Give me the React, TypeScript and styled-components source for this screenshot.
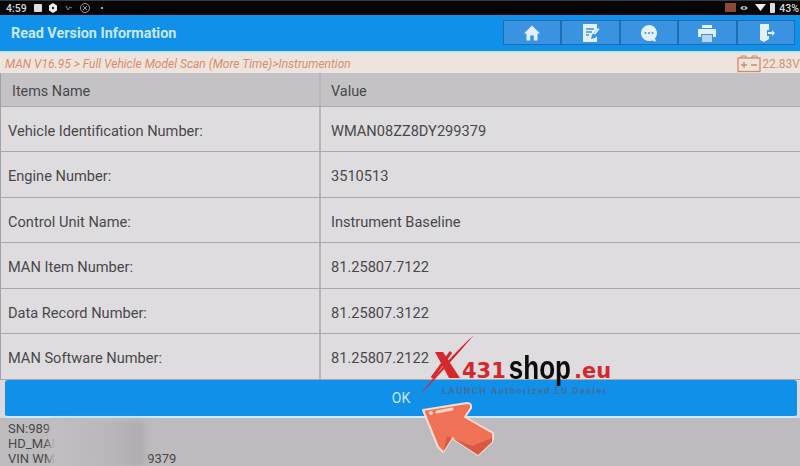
import React from 'react';
import styled, {createGlobalStyle} from 'styled-components';

const GlobalStyle = createGlobalStyle`
  html, body {
    margin: 0;
    padding: 0;
    width: 800px;
    height: 466px;
    overflow: hidden;
    background: #bdbbbd;
    font-family: Roboto, "Liberation Sans", sans-serif;
  }
`;

const Screen = styled.div`
  position: relative;
  width: 800px;
  height: 466px;
  overflow: hidden;
  display: flex;
  flex-direction: column;
`;

const StatusBar = styled.div`
  height: 15px;
  background: #060606;
  border-top: 1px solid #3a3a3a;
  box-sizing: border-box;
  display: flex;
  align-items: center;
  justify-content: space-between;
  padding: 0 1px 0 6px;
  color: #d8d8d8;
  font-size: 10.5px;
  font-weight: 500;
`;

const StatusGroup = styled.div`
  display: flex;
  align-items: center;
  gap: 3px;
`;

const Header = styled.div`
  height: 36px;
  background: #1190ea;
  border-bottom: 2px solid #bfe6fa;
  display: flex;
  align-items: center;
  justify-content: space-between;
  padding: 0 5px 0 11px;
`;

const Title = styled.div`
  color: #c9e9fb;
  font-size: 14.4px;
  font-weight: 700;
`;

const Toolbar = styled.div`
  display: flex;
  height: 25px;
  margin-top: -1px;
`;

const ToolButton = styled.div`
  width: 58.4px;
  background: #3a93e0;
  border: 1px solid #1f6cb0;
  box-sizing: border-box;
  display: flex;
  align-items: center;
  justify-content: center;
`;

const Breadcrumb = styled.div`
  height: 20px;
  background: #ede5dd;
  display: flex;
  align-items: center;
  justify-content: space-between;
  padding: 1px 0 0 5px;
  box-sizing: border-box;
  color: #d98b70;
  font-size: 12px;
  font-style: italic;
`;

const Voltage = styled.div`
  display: flex;
  align-items: center;
  gap: 1px;
  font-style: normal;
  color: #d6916f;
  font-size: 12px;
`;

const Row = styled.div<{$head?: boolean; $height: number}>`
  display: grid;
  grid-template-columns: 320px 1fr;
  height: ${p => p.$height}px;
  box-sizing: border-box;
  background: ${p => (p.$head ? '#c4c2c4' : '#dfdce0')};
  border-left: 1px solid #a2a1a3;
  border-bottom: 1px solid #a9a8aa;
  color: #48484a;
  font-size: ${p => (p.$head ? 14.4 : 14.6)}px;
`;

const Cell = styled.div<{$head?: boolean; $value?: boolean}>`
  display: flex;
  align-items: center;
  padding-left: ${p => (p.$value ? 10 : p.$head ? 11 : 7)}px;
  padding-top: 3px;
  border-left: ${p => (p.$value ? '2px solid #b7b6b8' : 'none')};
  margin-left: ${p => (p.$value ? -2 : 0)}px;
`;

const OkBar = styled.div`
  height: 38px;
  background: #dcd9dc;
  box-sizing: border-box;
  padding: 0 3px 0 5px;
`;

const OkButton = styled.div`
  height: 38px;
  background: #1190ea;
  border-radius: 3px;
  border-bottom: 2px solid #cfeafa;
  box-sizing: border-box;
  display: flex;
  align-items: center;
  justify-content: center;
  color: #c9e9fb;
  font-size: 14px;
`;

const Footer = styled.div`
  flex: 1;
  background: #bdbbbd;
  padding: 3px 0 0 8px;
  color: #48484a;
  font-size: 13px;
  line-height: 15px;
`;

const BlurPatch = styled.div`
  position: absolute;
  left: 50px;
  top: 421px;
  width: 96px;
  height: 46px;
  background: linear-gradient(90deg, #c2c0c2 0%, #b9b7b9 60%, #aeacae 95%, #b8b6b8 100%);
  filter: blur(3px);
`;

const VinTail = styled.span`
  margin-left: 92px;
`;

const LogoArea = styled.div`
  position: absolute;
  left: 420px;
  top: 334px;
  width: 200px;
  height: 70px;
`;

const LogoX = styled.svg`
  position: absolute;
  left: 0;
  top: 0;
`;

const LogoText = styled.div`
  position: absolute;
  left: 42px;
  top: 22px;
  display: flex;
  align-items: baseline;
  line-height: 26px;
`;

const LogoRed = styled.span`
  color: #d3282c;
  font-family: "DejaVu Sans", sans-serif;
  font-weight: 700;
  font-size: 21px;
`;

const LogoBlack = styled.span`
  display: inline-block;
  margin: 0 3px 0 3px;
  color: #0c0c0c;
  font-family: "Liberation Sans", sans-serif;
  font-weight: 700;
  font-size: 26px;
  transform: scaleY(1.25);
  transform-origin: 50% 75%;
`;

const LogoTagline = styled.div`
  position: absolute;
  left: 22px;
  top: 51px;
  color: #3f6f9f;
  font-size: 9.5px;
  font-weight: 700;
  letter-spacing: 1.3px;
  white-space: nowrap;
`;

const Arrow = styled.svg`
  position: absolute;
  left: 420px;
  top: 400px;
`;

const rows = [
  ['Vehicle Identification Number:', 'WMAN08ZZ8DY299379', 45],
  ['Engine Number:', '3510513', 46],
  ['Control Unit Name:', 'Instrument Baseline', 45],
  ['MAN Item Number:', '81.25807.7122', 46],
  ['Data Record Number:', '81.25807.3122', 45],
  ['MAN Software Number:', '81.25807.2122', 46],
] as const;

const toolIcons = [
  <svg key="home" width="18" height="18" viewBox="0 0 18 18">
    <path d="M9 1.5 17 9.5h-2.5V16.5H10.8V11.5H7.2V16.5H3.5V9.5H1z" fill="#e4f0f8" />
  </svg>,
  <svg key="edit" width="20" height="20" viewBox="0 0 20 20">
    <path d="M2 1h14v5l-5 6-1 4 4-1 2-2v6H2z" fill="#e4f0f8" />
    <path d="M5 6h8M5 9h6M5 12h3" stroke="#3a93e0" strokeWidth="1.3" />
    <path d="M12.5 10.5 17 5l1.5 1.2-4.5 5.6z" fill="#e4f0f8" />
  </svg>,
  <svg key="chat" width="20" height="20" viewBox="0 0 20 20">
    <path d="M10 2a8 8 0 1 0 3 15.4l4 1.4-1-3.6A8 8 0 0 0 10 2z" fill="#e4f0f8" />
    <circle cx="6.5" cy="10" r="1" fill="#3a93e0" />
    <circle cx="10" cy="10" r="1" fill="#3a93e0" />
    <circle cx="13.5" cy="10" r="1" fill="#3a93e0" />
  </svg>,
  <svg key="print" width="20" height="20" viewBox="0 0 20 20">
    <path d="M5 2h10v3H5z" fill="#e4f0f8" />
    <path d="M2 6h16a1 1 0 0 1 1 1v7h-3v-3H4v3H1V7a1 1 0 0 1 1-1z" fill="#e4f0f8" />
    <path d="M5 12h10v7H5z" fill="#b7d6ee" />
  </svg>,
  <svg key="exit" width="20" height="20" viewBox="0 0 20 20">
    <path d="M4 1h9v6h-2v6h2v3l-5 3-4-2z" fill="#e4f0f8" />
    <path d="M12 9h4V7l3 3-3 3v-2h-4z" fill="#e4f0f8" />
  </svg>,
];

export default function App() {
  return (
    <Screen>
      <GlobalStyle />
      <StatusBar>
        <StatusGroup>
          <span>4:59</span>
          <svg width="74" height="12" viewBox="0 0 74 12">
            <rect x="4" y="2" width="8" height="8" rx="1" fill="#ddd" />
            <path d="M23 1l4 2.5v5L23 11l-4-2.5v-5z" fill="#eee" />
            <circle cx="23" cy="6" r="1.2" fill="#222" />
            <path d="M36 4l2 4 2-3 2 1" stroke="#888" fill="none" />
            <circle cx="55" cy="6" r="4.5" stroke="#999" fill="none" />
            <path d="M53 4l4 4M57 4l-4 4" stroke="#999" />
            <circle cx="72" cy="6" r="1" fill="#ddd" />
          </svg>
        </StatusGroup>
        <StatusGroup>
          <svg width="51" height="12" viewBox="0 0 51 12">
            <rect x="0" y="1" width="11" height="9" fill="#8a4a3a" />
            <path d="M15 6q4-4 8 0q-4 4-8 0z" fill="#ccc" />
            <circle cx="19" cy="6" r="1.3" fill="#222" />
            <path d="M30 2h11l-5.5 7z" fill="#eee" />
            <rect x="45" y="1" width="5" height="10" rx="1" fill="#ddd" />
          </svg>
          <span>43%</span>
        </StatusGroup>
      </StatusBar>
      <Header>
        <Title>Read Version Information</Title>
        <Toolbar>
          {toolIcons.map(icon => (
            <ToolButton key={icon.key}>{icon}</ToolButton>
          ))}
        </Toolbar>
      </Header>
      <Breadcrumb>
        <span>MAN V16.95 &gt; Full Vehicle Model Scan (More Time)&gt;Instrumention</span>
        <Voltage>
          <svg width="24" height="18" viewBox="0 0 24 18">
            <path d="M4 3V1h5v2M15 3V1h5v2" fill="none" stroke="#d08a68" />
            <rect x="1" y="3" width="22" height="13.5" fill="none" stroke="#d08a68" strokeWidth="1.3" />
            <path d="M4 10h6M7 7v6M14 10h6" stroke="#d08a68" strokeWidth="1.3" />
          </svg>
          <span>22.83V</span>
        </Voltage>
      </Breadcrumb>
      <Row $head $height={34}>
        <Cell $head>Items Name</Cell>
        <Cell $head $value>Value</Cell>
      </Row>
      {rows.map(([name, value, height]) => (
        <Row key={name} $height={height}>
          <Cell>{name}</Cell>
          <Cell $value>{value}</Cell>
        </Row>
      ))}
      <OkBar>
        <OkButton>OK</OkButton>
      </OkBar>
      <Footer>
        <div>SN:989</div>
        <div>HD_MAN</div>
        <div>VIN WM<VinTail>9379</VinTail></div>
      </Footer>
      <BlurPatch />
      <LogoArea>
        <LogoX width="60" height="66" viewBox="0 0 60 66">
          <path d="M54 1 Q30 22 0 61 Q24 36 54 1z" fill="#d3282c" />
          <path d="M15 18h8l17 26H29z" fill="#d3282c" />
          <path d="M31 18 12 44" stroke="#d3282c" strokeWidth="3" />
        </LogoX>
        <LogoText>
          <LogoRed>431</LogoRed>
          <LogoBlack>shop</LogoBlack>
          <LogoRed>.eu</LogoRed>
        </LogoText>
        <LogoTagline>LAUNCH Authorized EU Dealer</LogoTagline>
      </LogoArea>
      <Arrow width="80" height="60" viewBox="0 0 80 60">
        <path d="M3 10 L47 3 Q52 3 51 8 L45 17 L73 33 Q74 38 72 42 L58 55 L32 38 L23 52 L18 47z" fill="#ef7257" stroke="#f6dcd3" strokeWidth="2" strokeLinejoin="round" />
        <path d="M58 55 L32 38 L23 52 L27 36 L52 46 L72 38 L72 42z" fill="#d95a43" />
        <path d="M17 12 L32 9" stroke="#f6d5c8" strokeWidth="3" strokeLinecap="round" />
        <circle cx="11" cy="13" r="2" fill="#f6d5c8" />
      </Arrow>
    </Screen>
  );
}
